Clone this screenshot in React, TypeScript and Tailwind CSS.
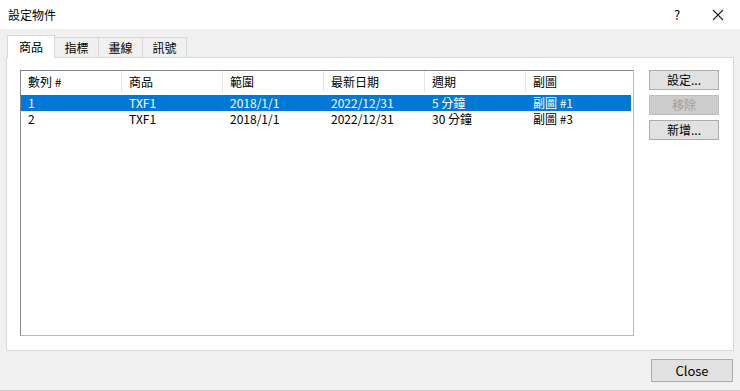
const font = { fontFamily: '"Noto Sans CJK TC", "Noto Sans", sans-serif' };

const columns = ["數列 #", "商品", "範圍", "最新日期", "週期", "副圖"];

const rows = [
  ["1", "TXF1", "2018/1/1", "2022/12/31", "5 分鐘", "副圖 #1"],
  ["2", "TXF1", "2018/1/1", "2022/12/31", "30 分鐘", "副圖 #3"],
];

const tabs = ["商品", "指標", "畫線", "訊號"];

const App = () => {
  return (
    <div
      className="w-[740px] h-[391px] bg-[#f0f0f0] flex flex-col text-[12px] text-black overflow-hidden border-b border-[#c8c8c8]"
      style={font}
    >
      {/* title bar */}
      <div className="h-[29px] bg-white flex items-center pl-[8px] shrink-0">
        <span className="flex-1 leading-none">設定物件</span>
        <span className="w-[14px] text-[13px] text-center mr-[28px]">?</span>
        <svg width="12" height="12" viewBox="0 0 12 12" className="mr-[16px]">
          <path d="M1 1 L11 11 M11 1 L1 11" stroke="#222" strokeWidth="1.1" />
        </svg>
      </div>

      {/* tabs */}
      <div className="flex items-end h-[28px] pl-[7px] shrink-0">
        {tabs.map((t, i) =>
          i === 0 ? (
            <div
              key={t}
              className="w-[48px] h-[23px] bg-white border border-b-0 border-[#d9d9d9] flex items-center justify-center relative top-[1px] z-10"
            >
              {t}
            </div>
          ) : (
            <div
              key={t}
              className="w-[44px] h-[20px] bg-[#f0f0f0] border border-b-0 border-l-0 border-[#d9d9d9] flex items-center justify-center"
            >
              {t}
            </div>
          )
        )}
      </div>

      {/* panel */}
      <div className="mx-[6px] h-[294px] bg-white border border-[#d9d9d9] flex pt-[12px] pl-[13px] pr-[14px]">
        <div className="w-[615px] h-[266px] border border-[#828790] border-r-[#b8b8b8] border-b-[#b8b8b8] flex flex-col">
          <div className="flex h-[21px] items-center">
            {columns.map((c) => (
              <div
                key={c}
                className="w-[101px] h-full border-r border-[#e5e5e5] flex items-center pl-[7px] last:border-r-0"
              >
                {c}
              </div>
            ))}
          </div>
          <div className="mt-[3px]">
            {rows.map((r, i) => (
              <div
                key={i}
                className={
                  "flex h-[16px] items-center mr-[2px] " +
                  (i === 0 ? "bg-[#0078d7] text-white" : "")
                }
              >
                {r.map((c, j) => (
                  <div key={j} className="w-[101px] pl-[7px] leading-none whitespace-nowrap">
                    {c}
                  </div>
                ))}
              </div>
            ))}
          </div>
        </div>

        <div className="ml-[15px] flex flex-col gap-[5px] pt-[0px]">
          <button className="w-[70px] h-[20px] bg-[#e1e1e1] border border-[#adadad] leading-none">
            設定...
          </button>
          <button className="w-[70px] h-[20px] bg-[#cccccc] border border-[#bfbfbf] text-[#a0a0a0] leading-none">
            移除
          </button>
          <button className="w-[70px] h-[20px] bg-[#e1e1e1] border border-[#adadad] leading-none">
            新增...
          </button>
        </div>
      </div>

      {/* footer */}
      <div className="flex justify-end pr-[7px] pt-[8px]">
        <button className="w-[82px] h-[23px] bg-[#e1e1e1] border border-[#adadad] text-[13px] leading-none">
          Close
        </button>
      </div>
    </div>
  );
};

export default App;
